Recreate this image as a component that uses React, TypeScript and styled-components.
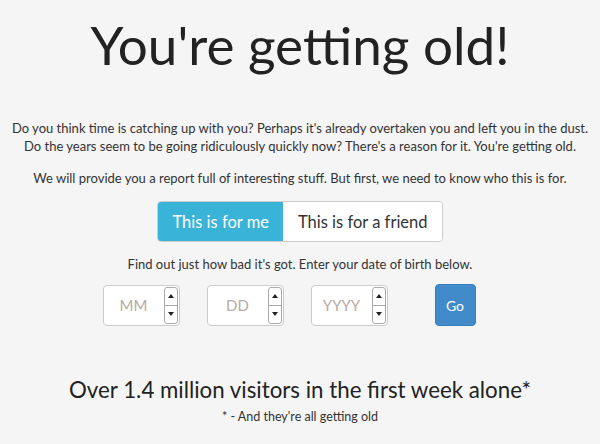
import React from 'react';
import styled, { createGlobalStyle } from 'styled-components';

const GlobalStyle = createGlobalStyle`
  html, body {
    margin: 0;
    padding: 0;
    background: #f5f5f5;
  }
  body {
    font-family: Lato, "Liberation Sans", sans-serif;
    color: #333;
  }
`;

const Page = styled.div`
  width: 600px;
  height: 444px;
  display: flex;
  flex-direction: column;
  align-items: center;
  text-align: center;
`;

const Title = styled.h1`
  margin: 13px 0 0;
  font-size: 53px;
  font-weight: 400;
  line-height: 64px;
  color: #222;
`;

const Intro = styled.p`
  margin: 42px 0 0;
  font-size: 13px;
  line-height: 18px;
  color: #333;
`;

const Note = styled.p<{ $top: number }>`
  margin: ${p => p.$top}px 0 0;
  font-size: 13px;
  line-height: 18px;
  color: #333;
`;

const Toggle = styled.div`
  margin-top: 14px;
  display: flex;
  border: 1px solid #ccc;
  border-radius: 4px;
  overflow: hidden;
  background: #fff;
`;

const ToggleButton = styled.button<{ $active?: boolean }>`
  font-family: inherit;
  font-size: 16.5px;
  height: 39px;
  padding: 0 14.5px;
  border: none;
  margin: 0;
  background: ${p => (p.$active ? '#39b3d7' : '#fff')};
  color: ${p => (p.$active ? '#fff' : '#333')};
  cursor: pointer;
`;

const DateRow = styled.div`
  margin: 11px 22px 0 0;
  display: flex;
  align-items: center;
  gap: 27px;
`;

const Field = styled.div`
  width: 77px;
  height: 41px;
  box-sizing: border-box;
  border: 1px solid #ccc;
  border-radius: 4px;
  background: #fff;
  display: flex;
  align-items: center;
`;

const FieldInput = styled.input`
  flex: 1;
  min-width: 0;
  border: none;
  outline: none;
  background: transparent;
  font-family: inherit;
  font-size: 15px;
  text-align: center;
  color: #333;
  &::placeholder {
    color: #b8aaa2;
  }
`;

const Spinner = styled.div`
  width: 14px;
  height: 37px;
  margin-right: 1px;
  box-sizing: border-box;
  border: 1px solid #aaa;
  border-radius: 3px;
  display: flex;
  flex-direction: column;
`;

const SpinPart = styled.div<{ $down?: boolean }>`
  flex: 1;
  display: flex;
  align-items: center;
  justify-content: center;
  border-top: ${p => (p.$down ? '1px solid #aaa' : 'none')};
  &::after {
    content: '';
    border-left: 3px solid transparent;
    border-right: 3px solid transparent;
    ${p => (p.$down ? 'border-top: 4px solid #222;' : 'border-bottom: 4px solid #222;')}
  }
`;

const GoButton = styled.button`
  margin-left: 20px;
  width: 41px;
  height: 42px;
  border: 1px solid #357ebd;
  border-radius: 4px;
  background: #428bca;
  color: #fff;
  font-family: inherit;
  font-size: 14px;
  cursor: pointer;
`;

const Stats = styled.h2`
  margin: 50px 0 0;
  font-size: 22.3px;
  font-weight: 400;
  line-height: 28px;
  color: #222;
`;

const Footnote = styled.p`
  margin: 5px 0 0;
  font-size: 12.5px;
  line-height: 16px;
  color: #333;
`;

const DateField: React.FC<{ placeholder: string }> = ({ placeholder }) => (
  <Field>
    <FieldInput placeholder={placeholder} />
    <Spinner>
      <SpinPart />
      <SpinPart $down />
    </Spinner>
  </Field>
);

export default function App() {
  return (
    <>
      <GlobalStyle />
      <Page>
        <Title>You're getting old!</Title>
        <Intro>
          Do you think time is catching up with you? Perhaps it's already overtaken you and left you in the dust.
          <br />
          Do the years seem to be going ridiculously quickly now? There's a reason for it. You're getting old.
        </Intro>
        <Note $top={14}>
          We will provide you a report full of interesting stuff. But first, we need to know who this is for.
        </Note>
        <Toggle>
          <ToggleButton $active>This is for me</ToggleButton>
          <ToggleButton>This is for a friend</ToggleButton>
        </Toggle>
        <Note $top={13}>Find out just how bad it's got. Enter your date of birth below.</Note>
        <DateRow>
          <DateField placeholder="MM" />
          <DateField placeholder="DD" />
          <DateField placeholder="YYYY" />
          <GoButton>Go</GoButton>
        </DateRow>
        <Stats>Over 1.4 million visitors in the first week alone*</Stats>
        <Footnote>* - And they're all getting old</Footnote>
      </Page>
    </>
  );
}
